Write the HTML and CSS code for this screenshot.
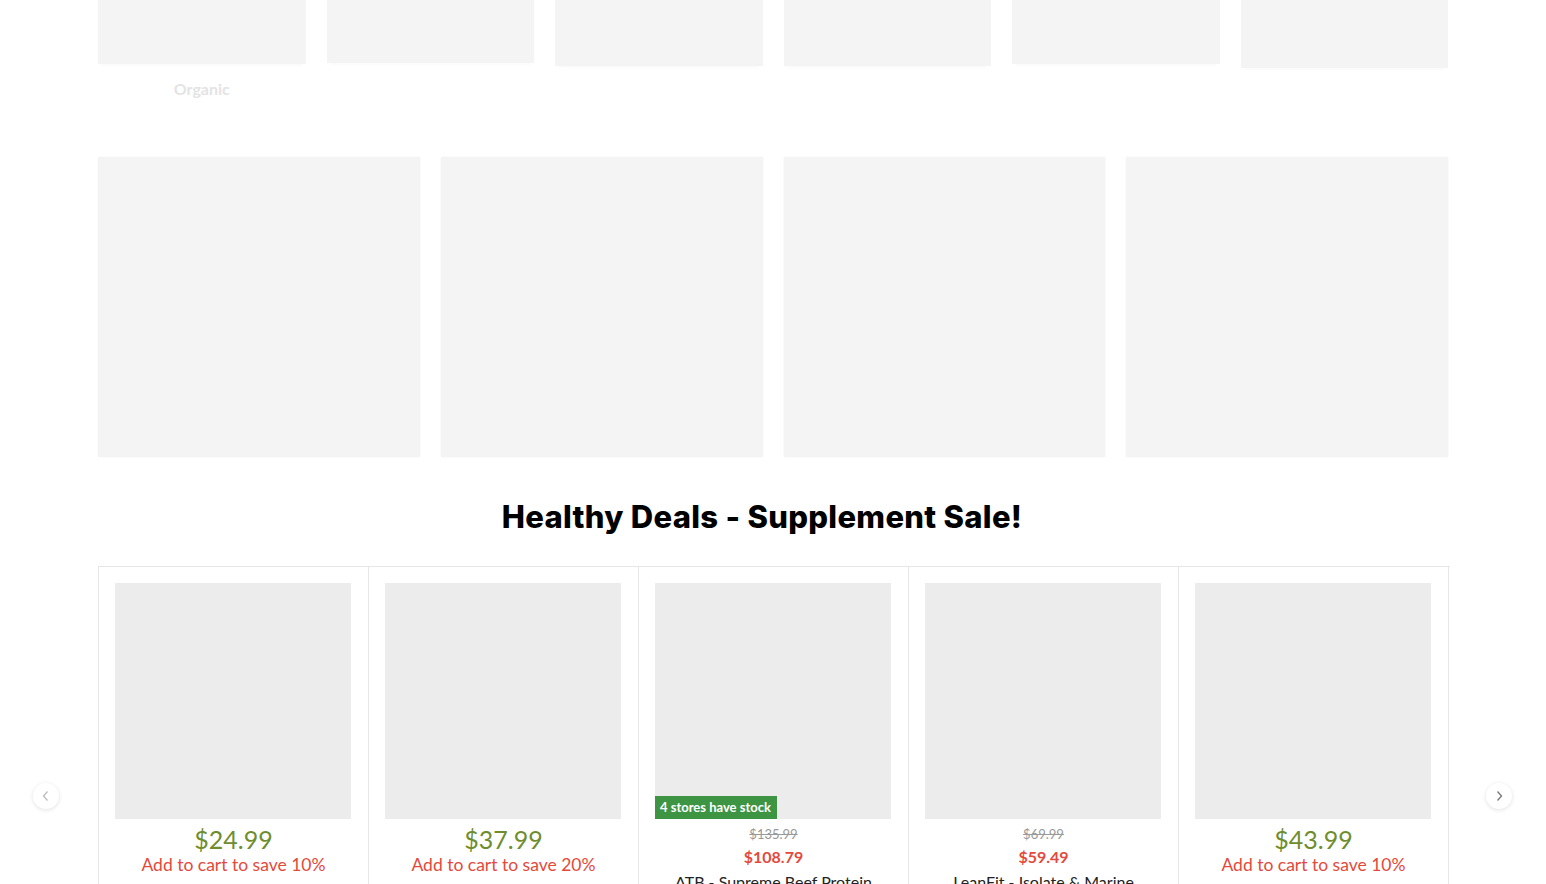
FILE: index.html
```html
<!DOCTYPE html>
<html>
  <head>
    <meta charset="UTF-8">
    <title>Healthy Deals</title>
    <link rel="stylesheet" href="styles.css">
  </head>
  <body>
    <div class="page">
      <div class="collections">
        <div class="collection">
          <div class="collection-img h64"></div>
          <p class="collection-name">Organic</p>
        </div>
        <div class="collection"><div class="collection-img h63"></div></div>
        <div class="collection"><div class="collection-img h66"></div></div>
        <div class="collection"><div class="collection-img h66"></div></div>
        <div class="collection"><div class="collection-img h64"></div></div>
        <div class="collection"><div class="collection-img h68"></div></div>
      </div>

      <div class="banners">
        <div class="banner"></div>
        <div class="banner"></div>
        <div class="banner"></div>
        <div class="banner"></div>
      </div>

      <h2 class="section-title">Healthy Deals - Supplement Sale!</h2>

      <div class="carousel">
        <button class="arrow arrow-prev" aria-label="Previous">
          <svg width="10" height="12" viewBox="0 0 10 12"><path d="M6.5 1.5 2.5 6l4 4.5" fill="none" stroke="#bbb" stroke-width="1.3"/></svg>
        </button>
        <div class="carousel-view">
          <div class="track">
            <div class="card">
              <div class="card-img"></div>
              <div class="price">$24.99</div>
              <div class="promo">Add to cart to save 10%</div>
            </div>
            <div class="card">
              <div class="card-img"></div>
              <div class="price">$37.99</div>
              <div class="promo">Add to cart to save 20%</div>
            </div>
            <div class="card">
              <div class="card-img">
                <span class="stock">4 stores have stock</span>
              </div>
              <div class="was">$135.99</div>
              <div class="now">$108.79</div>
              <div class="title">ATB - Supreme Beef Protein</div>
            </div>
            <div class="card">
              <div class="card-img"></div>
              <div class="was">$69.99</div>
              <div class="now">$59.49</div>
              <div class="title">LeanFit - Isolate &amp; Marine</div>
            </div>
            <div class="card">
              <div class="card-img"></div>
              <div class="price">$43.99</div>
              <div class="promo">Add to cart to save 10%</div>
            </div>
            <div class="card">
              <div class="card-img"></div>
            </div>
          </div>
        </div>
        <button class="arrow arrow-next" aria-label="Next">
          <svg width="10" height="12" viewBox="0 0 10 12"><path d="M3.5 1.5 7.5 6l-4 4.5" fill="none" stroke="#777" stroke-width="1.3"/></svg>
        </button>
      </div>
    </div>
  </body>
</html>
```

FILE: styles.css
```css
body {
  margin: 0;
  background-color: #fff;
  font-family: Lato, "Open Sans", sans-serif;
  overflow: hidden;
}

.page {
  width: 1350px;
  margin: 0 auto;
}

.collections {
  display: grid;
  grid-template-columns: repeat(6, 1fr);
  gap: 21px;
  height: 125px;
}

.collection-img {
  background-color: #f4f4f4;
  box-shadow: 0 4px 4px -3px rgba(0, 0, 0, 0.03);
}

.h63 { height: 63px; }
.h64 { height: 64px; }
.h66 { height: 66px; }
.h68 { height: 68px; }

.collection-name {
  margin: 15px 0 0;
  text-align: center;
  font-size: 16px;
  font-weight: 700;
  color: #e4e4e4;
}

.banners {
  display: grid;
  grid-template-columns: repeat(4, 1fr);
  gap: 21px;
  margin-top: 32px;
}

.banner {
  height: 300px;
  background-color: #f4f4f4;
  box-shadow: 0 0 2px rgba(0, 0, 0, 0.05);
}

.section-title {
  margin: 42px 0 31px;
  padding-right: 22px;
  text-align: center;
  font-family: Inter, sans-serif;
  font-weight: 800;
  font-size: 31px;
  letter-spacing: 0.3px;
  line-height: 36px;
  color: #000;
}

.carousel {
  position: relative;
}

.carousel-view {
  width: 1352px;
  overflow: hidden;
}

.track {
  display: flex;
}

.card {
  flex: 0 0 270px;
  box-sizing: border-box;
  height: 330px;
  padding: 16px;
  border-top: 1px solid #e6e6e6;
  border-left: 1px solid #e6e6e6;
  text-align: center;
}

.card-img {
  position: relative;
  width: 236px;
  height: 236px;
  background-color: #ececec;
}

.stock {
  position: absolute;
  left: 0;
  bottom: 0;
  padding: 0 6px 0 5px;
  line-height: 23px;
  background-color: #3d9442;
  color: #fff;
  font-size: 13px;
  font-weight: 700;
}

.price {
  margin-top: 5px;
  font-size: 25px;
  line-height: 30px;
  color: #6f8d2c;
}

.promo {
  font-size: 17.5px;
  line-height: 22px;
  color: #e34a3c;
}

.was {
  margin-top: 7px;
  font-size: 13px;
  line-height: 16px;
  color: #999;
  text-decoration: line-through;
}

.now {
  margin-top: 5px;
  font-size: 16px;
  font-weight: 700;
  line-height: 20px;
  color: #e34a3c;
}

.title {
  margin-top: 5px;
  font-size: 16px;
  line-height: 20px;
  color: #222;
}

.arrow {
  position: absolute;
  top: 217px;
  width: 26px;
  height: 26px;
  padding: 0;
  border: none;
  border-radius: 50%;
  background-color: #fff;
  box-shadow: 0 1px 4px rgba(0, 0, 0, 0.12);
  display: flex;
  align-items: center;
  justify-content: center;
  cursor: pointer;
}

.arrow-prev {
  left: -65px;
}

.arrow-next {
  right: -64px;
}
```
